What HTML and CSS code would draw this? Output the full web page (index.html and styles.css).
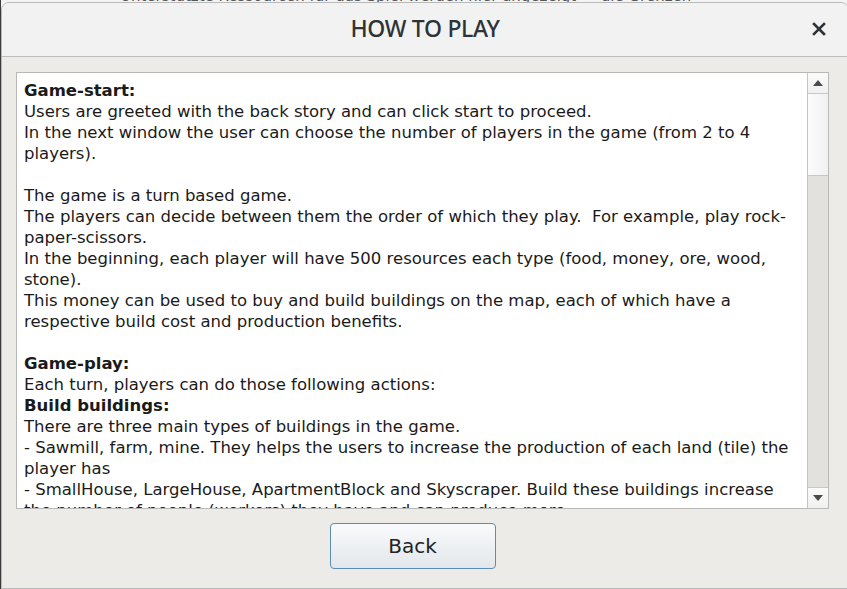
FILE: index.html
```html
<!DOCTYPE html>
<html>
<head>
<meta charset="utf-8">
<link rel="stylesheet" href="styles.css">
</head>
<body>
<div class="behind">Unterstützte Ressourcen für das Spiel werden hier angezeigt — die Grenzen</div>
<div class="dialog">
  <div class="header">
    <div class="title">HOW TO PLAY</div>
    <button class="close" aria-label="Close">
      <svg width="14" height="14" viewBox="0 0 14 14"><path d="M2 2 L12 12 M12 2 L2 12" stroke="#2e3436" stroke-width="2.6" stroke-linecap="square"/></svg>
    </button>
  </div>
  <div class="content">
    <div class="textbox">
      <div class="text">
        <div class="line b">Game-start:</div>
        <div class="line">Users are greeted with the back story and can click start to proceed.</div>
        <div class="line">In the next window the user can choose the number of players in the game (from 2 to 4</div>
        <div class="line">players).</div>
        <div class="line">&nbsp;</div>
        <div class="line">The game is a turn based game.</div>
        <div class="line">The players can decide between them the order of which they play.&nbsp; For example, play rock-</div>
        <div class="line">paper-scissors.</div>
        <div class="line">In the beginning, each player will have 500 resources each type (food, money, ore, wood,</div>
        <div class="line">stone).</div>
        <div class="line">This money can be used to buy and build buildings on the map, each of which have a</div>
        <div class="line">respective build cost and production benefits.</div>
        <div class="line">&nbsp;</div>
        <div class="line b">Game-play:</div>
        <div class="line">Each turn, players can do those following actions:</div>
        <div class="line b">Build buildings:</div>
        <div class="line">There are three main types of buildings in the game.</div>
        <div class="line">- Sawmill, farm, mine. They helps the users to increase the production of each land (tile) the</div>
        <div class="line">player has</div>
        <div class="line">- SmallHouse, LargeHouse, ApartmentBlock and Skyscraper. Build these buildings increase</div>
        <div class="line">the number of people (workers) they have and can produce more.</div>
      </div>
      <div class="scrollbar">
        <div class="arrow up"><span class="tri-up"></span></div>
        <div class="track">
          <div class="thumb"></div>
        </div>
        <div class="arrow down"><span class="tri-down"></span></div>
      </div>
    </div>
    <div class="actions">
      <button class="btn">Back</button>
    </div>
  </div>
</div>
</body>
</html>
```

FILE: styles.css
```css
* { box-sizing: border-box; }
html, body { margin: 0; padding: 0; }
body {
  width: 847px;
  height: 589px;
  overflow: hidden;
  background: #f4f4f4;
  position: relative;
}
body::before {
  content: "";
  position: absolute;
  left: 0;
  top: 0;
  width: 1px;
  height: 100%;
  background: #3a3a3a;
}
.behind {
  position: absolute;
  top: -13px;
  left: 120px;
  font: 15px "DejaVu Sans", sans-serif;
  color: #555;
  white-space: nowrap;
}
.dialog {
  position: absolute;
  top: 2px;
  left: 1px;
  width: 848px;
  height: 587px;
  border: 1px solid #b9b9b9;
  border-radius: 8px 8px 0 0;
  background: #edebe8;
  display: flex;
  flex-direction: column;
  overflow: hidden;
}
.header {
  height: 54px;
  flex: none;
  background: #f2f2f2;
  border-bottom: 1px solid #bcbcbc;
  display: flex;
  align-items: center;
  justify-content: center;
  position: relative;
}
.title {
  font: 500 23px "Noto Sans", sans-serif;
  color: #2e3436;
  letter-spacing: -0.3px;
  margin-top: -4px;
}
.close {
  position: absolute;
  right: 22px;
  top: 19px;
  border: 0;
  background: none;
  padding: 0;
  width: 14px;
  height: 14px;
  display: flex;
}
.content {
  flex: 1;
  display: flex;
  flex-direction: column;
  padding: 15px 19px 0 14px;
}
.textbox {
  height: 437px;
  border: 1px solid #b8b8b8;
  background: #fff;
  display: flex;
  overflow: hidden;
}
.text {
  flex: 1;
  padding: 7px 0 0 7px;
  font: 16.5px/21px "DejaVu Sans", sans-serif;
  color: #1a1a1a;
  overflow: hidden;
}
.line { white-space: pre; }
.b { font-weight: bold; }
.scrollbar {
  width: 21px;
  flex: none;
  border-left: 1px solid #c4c4c4;
  display: flex;
  flex-direction: column;
  background: #e2e1de;
}
.arrow {
  height: 21px;
  flex: none;
  background: linear-gradient(#fbfbfb, #f0f0f0);
  display: flex;
  align-items: center;
  justify-content: center;
}
.arrow.up { border-bottom: 1px solid #c8c8c8; }
.arrow.down { border-top: 1px solid #c8c8c8; }
.tri-up {
  width: 0; height: 0;
  border-left: 5px solid transparent;
  border-right: 5px solid transparent;
  border-bottom: 6px solid #4a4a4a;
}
.tri-down {
  width: 0; height: 0;
  border-left: 5px solid transparent;
  border-right: 5px solid transparent;
  border-top: 6px solid #4a4a4a;
}
.track { flex: 1; }
.thumb {
  height: 82px;
  background: linear-gradient(90deg, #fbfbfb, #f1f1f1);
  border-bottom: 1px solid #c8c8c8;
}
.actions {
  display: flex;
  justify-content: center;
  padding-top: 14px;
  padding-right: 20px;
}
.btn {
  width: 166px;
  height: 46px;
  border: 1px solid #5a8db5;
  border-radius: 4px;
  background: linear-gradient(#f9fafb, #e3e7eb);
  font: 20px "DejaVu Sans", sans-serif;
  color: #222;
  padding: 0;
}
```
